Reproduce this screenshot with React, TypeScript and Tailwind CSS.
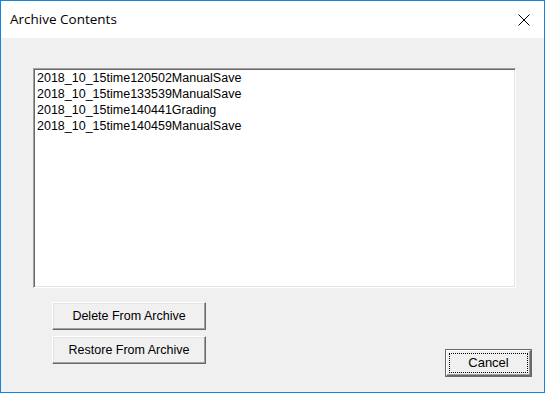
import React from "react";

const items = [
  "2018_10_15time120502ManualSave",
  "2018_10_15time133539ManualSave",
  "2018_10_15time140441Grading",
  "2018_10_15time140459ManualSave",
];

function DlgButton({ label, className = "" }: { label: string; className?: string }) {
  return (
    <button
      className={
        "flex items-center justify-center bg-[#f0f0f0] text-[12.5px] text-black border border-t-white border-l-white border-r-[#696969] border-b-[#696969] shadow-[inset_-1px_-1px_0_#a0a0a0,inset_1px_1px_0_#e3e3e3] " +
        className
      }
    >
      {label}
    </button>
  );
}

export default function App() {
  return (
    <div
      className="w-[545px] h-[393px] border border-[#1883d7] bg-[#f0f0f0] flex flex-col"
      style={{ fontFamily: '"Liberation Sans", Arial, sans-serif' }}
    >
      {/* title bar */}
      <div className="h-[37px] bg-white flex items-center justify-between pl-[9px] pr-[14px]">
        <span className="text-[13.5px] text-black" style={{ fontFamily: '"Open Sans", sans-serif' }}>
          Archive Contents
        </span>
        <svg width="12" height="12" viewBox="0 0 12 12" className="mt-[1px]">
          <path d="M0.5 0.5 L11.5 11.5 M11.5 0.5 L0.5 11.5" stroke="#000" strokeWidth="1" />
        </svg>
      </div>

      <div className="flex-1 flex flex-col pl-[32px] pr-[12px] pt-[30px]">
        {/* list */}
        <div className="w-[483px] h-[220px] bg-white border border-t-[#a0a0a0] border-l-[#a0a0a0] border-r-white border-b-white shadow-[inset_1px_1px_0_#696969,inset_-1px_-1px_0_#e3e3e3] pl-[3px] pt-[1px]">
          {items.map((it) => (
            <div key={it} className="text-[12.5px] leading-[16px] text-black">
              {it}
            </div>
          ))}
        </div>

        {/* buttons */}
        <div className="flex mt-[14px]">
          <div className="flex flex-col gap-[6px] ml-[19px]">
            <DlgButton label="Delete From Archive" className="w-[154px] h-[28px]" />
            <DlgButton label="Restore From Archive" className="w-[154px] h-[28px]" />
          </div>
          <div className="ml-auto mt-[47px] w-[87px] h-[28px] border border-[#696969]">
            <div className="w-full h-full bg-[#f0f0f0] border border-t-white border-l-white border-r-[#696969] border-b-[#696969] shadow-[inset_-1px_-1px_0_#a0a0a0] p-[2px]">
              <div className="w-full h-full border border-dotted border-black flex items-center justify-center text-[13px] text-black">
                Cancel
              </div>
            </div>
          </div>
        </div>
      </div>
    </div>
  );
}
